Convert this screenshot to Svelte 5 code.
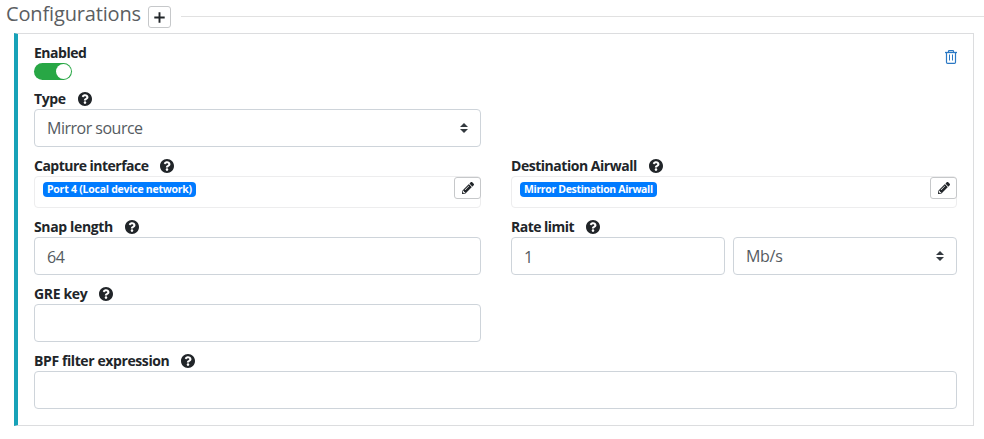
<script>
  let enabled = $state(true);
  let snap = $state('64');
  let rate = $state('1');
  let gre = $state('');
  let bpf = $state('');
</script>

{#snippet label(text, spacing = 0)}
  <div class="label">
    <span style:letter-spacing="{spacing}px">{text}</span>
    <svg class="help" viewBox="8 8 496 496" width="14" height="14">
      <path fill="#212529" d="M504 256c0 136.997-111.043 248-248 248S8 392.997 8 256C8 119.083 119.043 8 256 8s248 111.083 248 248zM262.655 90c-54.497 0-89.255 22.957-116.549 63.758-3.536 5.286-2.353 12.415 2.715 16.258l34.699 26.31c5.205 3.947 12.621 3.008 16.665-2.122 17.864-22.658 30.113-35.797 57.303-35.797 20.429 0 45.698 13.148 45.698 32.958 0 14.976-12.363 22.667-32.534 33.976C247.128 238.528 216 254.941 216 296v4c0 6.627 5.373 12 12 12h56c6.627 0 12-5.373 12-12v-1.333c0-28.462 83.186-29.647 83.186-106.667 0-58.002-60.165-102-116.531-102zM256 338c-25.365 0-46 20.635-46 46 0 25.364 20.635 46 46 46s46-20.636 46-46c0-25.364-20.635-46-46-46z" />
    </svg>
  </div>
{/snippet}

{#snippet arrows()}
  <svg class="arrows" viewBox="0 0 8 10" width="8" height="10"><path d="M4 0 8 4H0ZM0 6H8L4 10Z" fill="#343a40" /></svg>
{/snippet}

{#snippet picker(text, spacing)}
  <div class="picker">
    <span class="badge" style:letter-spacing="{spacing}px">{text}</span>
    <button class="edit" aria-label="Edit">
      <svg viewBox="0 0 512 512" width="12" height="12">
        <path fill="#212529" d="M497.9 142.1l-46.1 46.1c-4.7 4.7-12.3 4.7-17 0l-111-111c-4.7-4.7-4.7-12.3 0-17l46.1-46.1c18.7-18.7 49.1-18.7 67.9 0l60.1 60.1c18.8 18.7 18.8 49.1 0 67.9zM284.2 99.8L21.6 362.4.4 483.9c-2.9 16.4 11.4 30.6 27.8 27.8l121.5-21.3 262.6-262.6c4.7-4.7 4.7-12.3 0-17l-111-111c-4.8-4.7-12.4-4.7-17.1 0zM124.1 339.9c-5.5-5.5-5.5-14.3 0-19.8l154-154c5.5-5.5 14.3-5.5 19.8 0s5.5 14.3 0 19.8l-154 154c-5.5 5.5-14.3 5.5-19.8 0zM88 424h48v36.3l-64.5 11.3-31.1-31.1L51.7 376H88v48z" />
      </svg>
    </button>
  </div>
{/snippet}

<main>
  <header>
    <h1>Configurations</h1>
    <button class="add" aria-label="Add">
      <svg viewBox="0 0 11 11" width="11" height="11"><path d="M5.5 .3V10.7M.3 5.5H10.7" stroke="#212529" stroke-width="1.9" /></svg>
    </button>
    <hr />
  </header>

  <section class="card">
    <div class="top">
      <div>
        <div class="label"><span style:letter-spacing="-0.48px">Enabled</span></div>
        <button class="switch" class:on={enabled} aria-label="Enabled" onclick={() => (enabled = !enabled)}><i></i></button>
      </div>
      <svg class="trash" viewBox="0 0 12 14" width="12" height="14" fill="none" stroke="#2b78c4">
        <path d="M0 2.5H12" stroke-width="1.3" />
        <path d="M3.5 2.2V1.3Q3.5.6 4.2.6H7.8Q8.5.6 8.5 1.3V2.2M1.5 2.5V12.2Q1.5 13.3 2.6 13.3H9.4Q10.5 13.3 10.5 12.2V2.5" stroke-width="1.2" />
        <path d="M4.5 4.5V10.5M7.5 4.5V10.5" />
      </svg>
    </div>

    <div class="row">
      <div class="field">
        {@render label('Type', -0.4)}
        <div class="control"><span class="mirror">Mirror source</span>{@render arrows()}</div>
      </div>
    </div>

    <div class="row">
      <div class="field">
        {@render label('Capture interface', -0.52)}
        {@render picker('Port 4 (Local device network)', -0.24)}
      </div>
      <div class="field">
        {@render label('Destination Airwall', -0.47)}
        {@render picker('Mirror Destination Airwall', -0.34)}
      </div>
    </div>

    <div class="row">
      <div class="field">
        {@render label('Snap length', -0.35)}
        <input class="control" bind:value={snap} aria-label="Snap length" />
      </div>
      <div class="field">
        {@render label('Rate limit', -0.53)}
        <div class="pair">
          <input class="control rate" bind:value={rate} aria-label="Rate limit" />
          <div class="control unit"><span>Mb/s</span>{@render arrows()}</div>
        </div>
      </div>
    </div>

    <div class="row">
      <div class="field">
        {@render label('GRE key', -0.35)}
        <input class="control" bind:value={gre} aria-label="GRE key" />
      </div>
    </div>

    <div class="row wide">
      <div class="field">
        {@render label('BPF filter expression', -0.4)}
        <input class="control" bind:value={bpf} aria-label="BPF filter expression" />
      </div>
    </div>
  </section>
</main>

<style>
  :global(body) { background: #fff; }
  main, main * { box-sizing: border-box; }
  main {
    height: 439px;
    overflow: hidden;
    font-family: "Open Sans", "Noto Sans", sans-serif;
    color: #212529;
  }
  button { padding: 0; background: #fff; font: inherit; }
  header { display: flex; height: 33px; padding-left: 6px; }
  h1 {
    width: 142px;
    margin: 0;
    font-size: 20px;
    line-height: 27px;
    font-weight: 400;
    letter-spacing: -0.15px;
    color: #5b5e62;
    white-space: nowrap;
  }
  .add {
    display: grid;
    place-items: center;
    width: 23px;
    height: 22px;
    margin-top: 6px;
    padding-top: 1px;
    border: 1px solid #c6c8ca;
    border-radius: 3px;
  }
  hr { flex: 1; height: 1px; margin: 16px 0 0 10px; border: 0; background: #e1e1e1; }
  .card {
    width: 960px;
    height: 393px;
    margin-left: 14px;
    padding: 8px 16px 0;
    border: 1px solid #dcdddf;
    border-left: 4px solid #17a2b8;
  }
  .top { display: flex; justify-content: space-between; height: 46px; }
  .trash { margin: 8px 0 0; }
  .label {
    display: flex;
    align-items: center;
    height: 21px;
    font-size: 14px;
    line-height: 21px;
    font-weight: 700;
    white-space: nowrap;
  }
  .help { margin-left: 12px; }
  .switch {
    display: block;
    width: 38px;
    height: 17px;
    padding: 1px;
    border: 0;
    border-radius: 9px;
    background: #adb5bd;
  }
  .switch i { display: block; width: 15px; height: 15px; border-radius: 50%; background: #fff; }
  .switch.on { background: #28a745; }
  .switch.on i { margin-left: auto; }
  .row { display: grid; grid-template-columns: 447px 446px; gap: 30px; margin-bottom: 8px; }
  .wide { grid-template-columns: 923px; }
  .control {
    display: flex;
    align-items: center;
    justify-content: space-between;
    width: 100%;
    height: 38px;
    padding: 0 12px;
    border: 1px solid #ced4da;
    border-radius: 4px;
    background: #fff;
    font: 400 16px/24px "Open Sans", "Noto Sans", sans-serif;
    letter-spacing: -0.3px;
    color: #555b61;
    outline: 0;
  }
  input.control { padding-top: 2px; letter-spacing: -0.5px; }
  .mirror { letter-spacing: -0.5px; }
  .pair { display: flex; gap: 8px; }
  .rate { width: 214px; }
  .unit { width: 224px; }
  .picker {
    display: flex;
    justify-content: space-between;
    height: 32px;
    padding-left: 8px;
    border: 1px solid #ededee;
    border-radius: 4px;
  }
  .badge {
    height: 15px;
    margin-top: 5px;
    padding: 0 4px;
    border-radius: 4px;
    background: #007bff;
    color: #fff;
    font-size: 10.5px;
    line-height: 15px;
    font-weight: 700;
    white-space: nowrap;
  }
  .edit {
    display: grid;
    place-items: center;
    width: 27px;
    height: 22px;
    margin-right: -1px;
    border: 1px solid #c6c8ca;
    border-radius: 3px;
  }
</style>
